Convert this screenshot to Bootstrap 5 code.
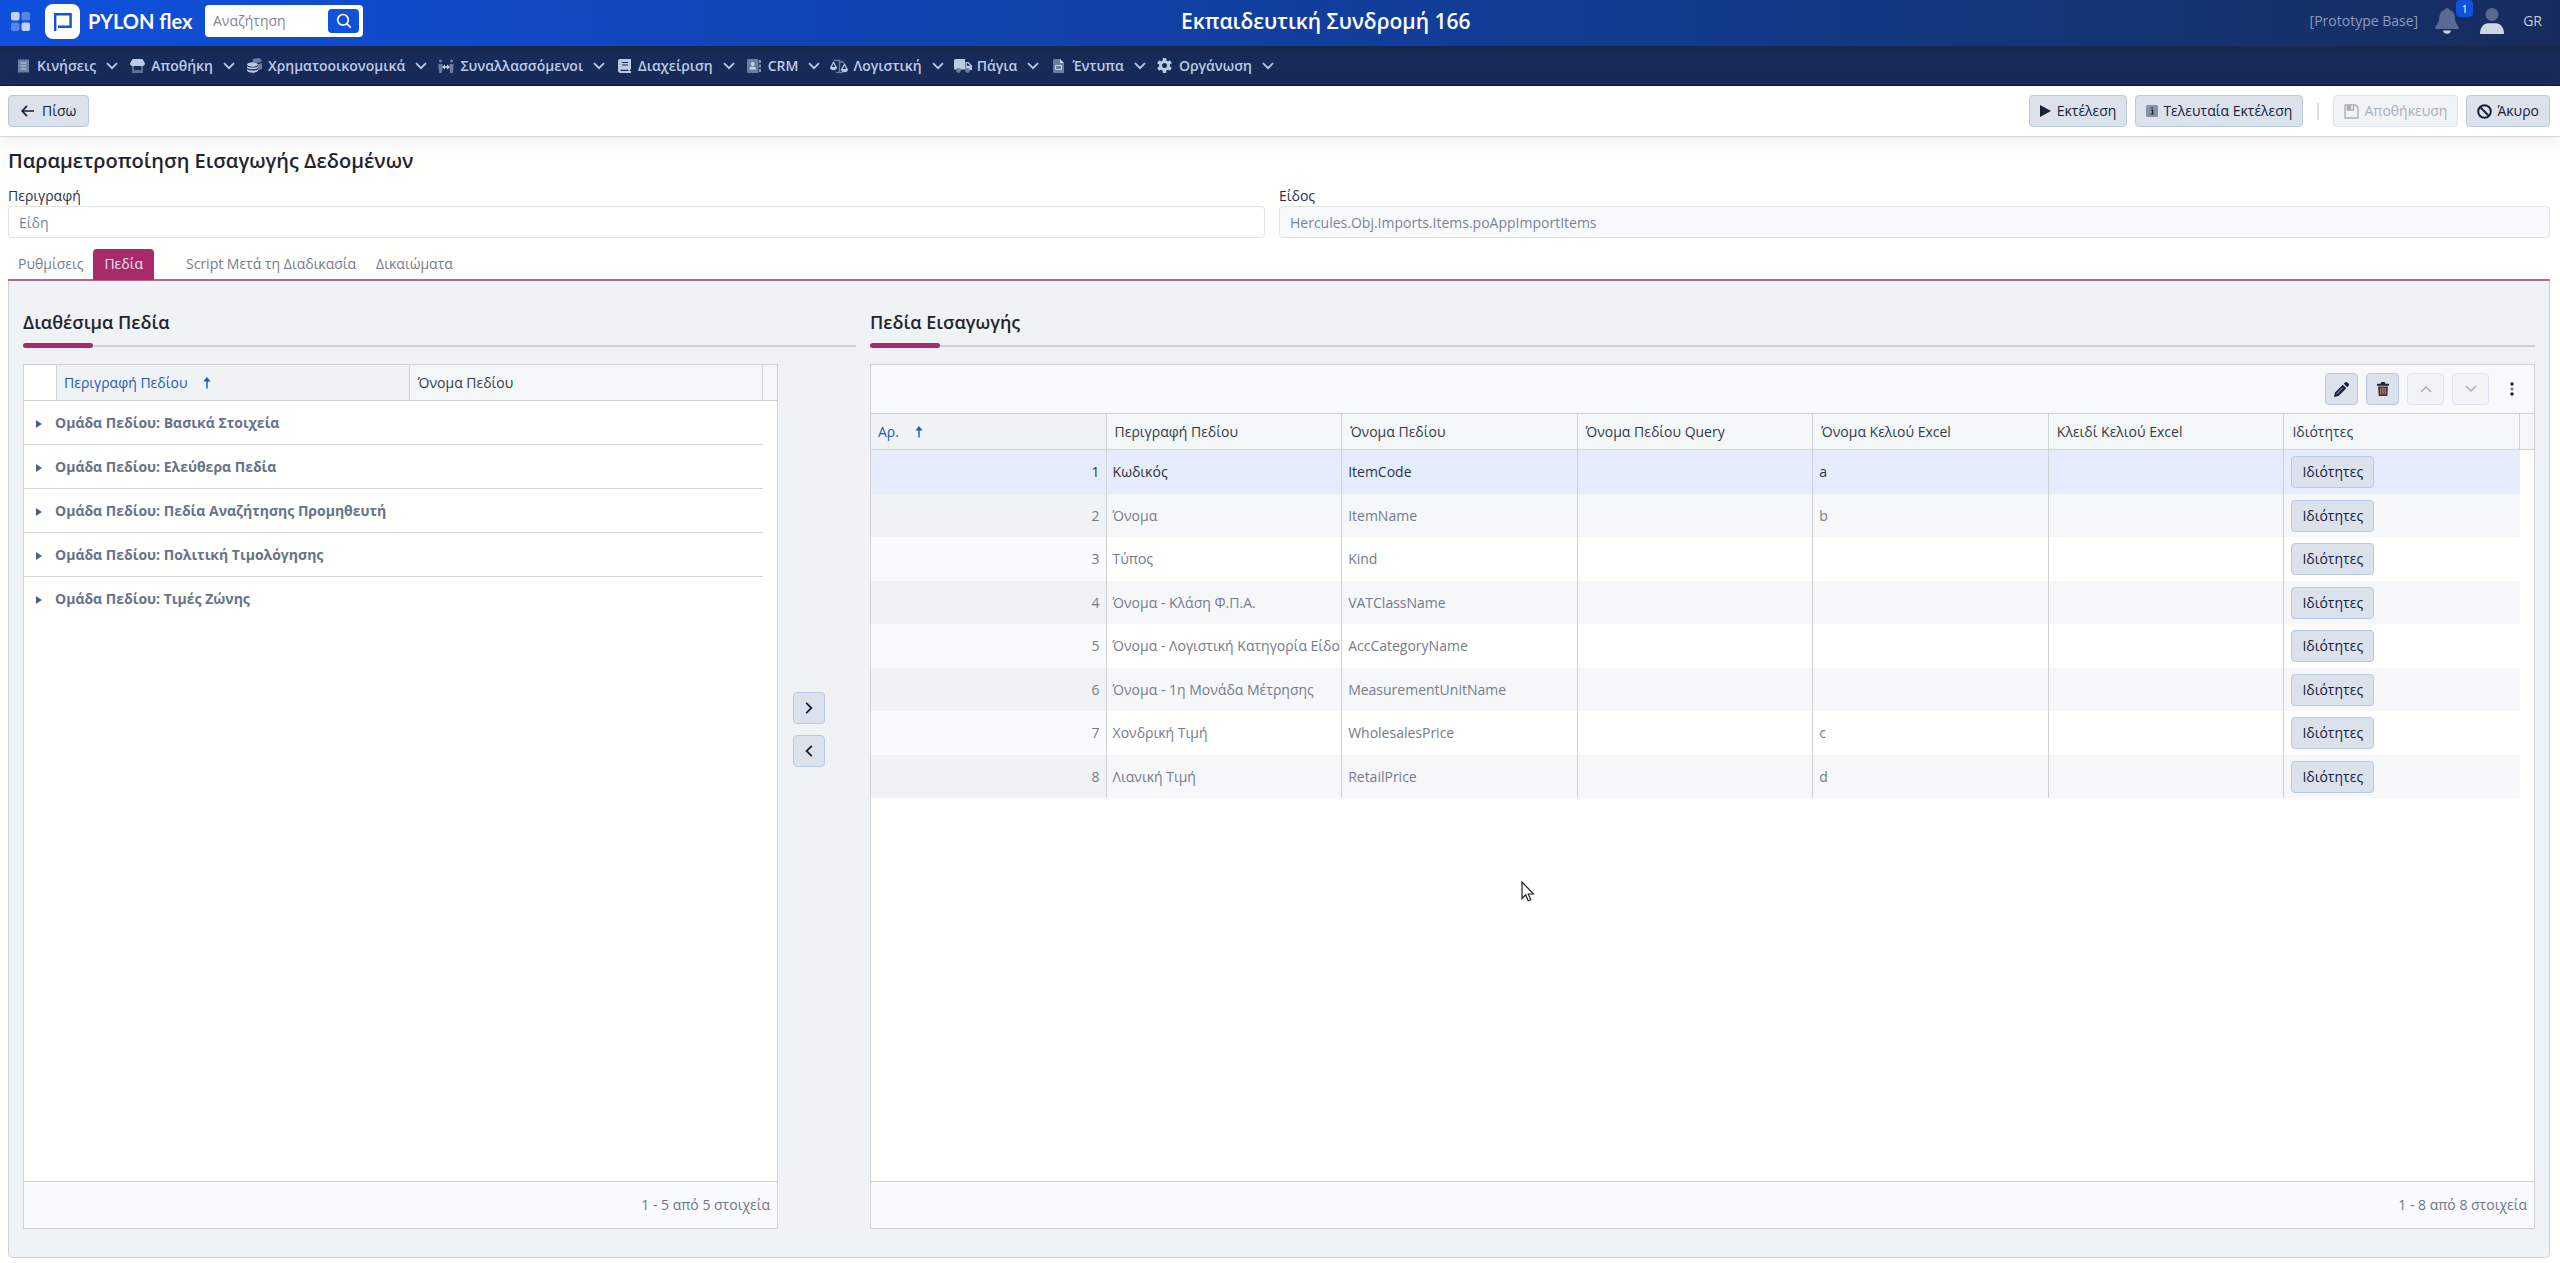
<!DOCTYPE html>
<html lang="el">
<head>
<meta charset="utf-8">
<meta name="viewport" content="width=device-width, initial-scale=1">
<title>Παραμετροποίηση Εισαγωγής Δεδομένων</title>
<link href="https://cdn.jsdelivr.net/npm/bootstrap@5.3.0/dist/css/bootstrap.min.css" rel="stylesheet">
<style>
body{font-family:"Open Sans","Noto Sans",sans-serif;font-size:14px;line-height:20px;color:#1f2430;background:#fffffd}
a{text-decoration:none}
svg{display:block;flex:none}
.brandbar{height:46px;padding-bottom:4px;background:linear-gradient(90deg,#0f50de 0%,#1046b8 28%,#123d98 56%,#12377c 78%,#172c5c 100%);color:#fff}
.apps{margin:0 15px 0 11px}
.logo-name{font-family:"Lato",sans-serif;font-size:20px;font-weight:700;color:#fff;margin-left:8px;width:117px}
.search-box{width:158px;height:32px;background:#fff;border-radius:4px;padding:0 4px 0 8px}
.search-box input{border:0;outline:0;background:none;color:#5f6b80;width:100%;min-width:0;padding:0}
.search-box input::placeholder{color:#7d8698;opacity:1}
.search-box button{width:31px;height:24px;border:0;border-radius:4px;background:#1152db;color:#fff;padding:0}
.company{font-size:21px;font-weight:600;line-height:28px;margin:0;padding-right:21px}
.base-name{color:#8c9abd}
.bell{margin:0 21px 0 17px}
.bell-count{left:21px;top:-8px;width:17px;height:17px;border-radius:4px;background:#1152db;color:#fff;font-size:11px;line-height:17px;text-align:center}
.lang{color:#c3cbdc;margin:0 18px 0 19px}
.menubar{height:40px;background:linear-gradient(#19274c,#182a58 8px);border-bottom:1px solid #0a1636;padding-left:14px;gap:10px}
.menubar a{color:#bccae6;font-weight:600;gap:5px}
.menubar .ico{width:18px;display:flex;justify-content:center}
.menubar .chev{margin-left:5px}
.actionbar{height:51px;border-bottom:1px solid #d5d7da;box-shadow:0 4px 14px rgba(90,110,150,.12);padding:0 10px 0 8px}
.btn-flat{--bs-btn-font-size:14px;--bs-btn-line-height:20px;--bs-btn-padding-y:5px;--bs-btn-padding-x:10px;--bs-btn-border-radius:4px;--bs-btn-bg:#dbe2ec;--bs-btn-border-color:#b9c8e3;--bs-btn-color:#16213a;--bs-btn-hover-bg:#cdd7e6;--bs-btn-hover-border-color:#b9c8e3;--bs-btn-disabled-bg:#f1f4f6;--bs-btn-disabled-border-color:#dbe3f0;--bs-btn-disabled-color:#a9aeb6;--bs-btn-disabled-opacity:1;display:inline-flex;align-items:center;justify-content:center;height:32px;gap:5px;white-space:nowrap}
.btn-square{width:33px;--bs-btn-padding-x:0px}
.btn-wide{width:37px}
.btn-back{--bs-btn-padding-x:12px;gap:8px}
.sep{width:2px;height:17px;background:#dcdfe5;margin:0 14px}
.page-title{font-size:20px;line-height:28px;font-weight:600;margin:10px 0 11px}
.main-area{padding:0 10px 5px 8px}
.fields .form-label{line-height:20px;margin:0;color:#26334f;display:block}
.fields .form-control{height:32px;font-size:14px;line-height:20px;padding:5px 10px;border:1px solid #dfe3e6;border-radius:4px;color:#7b8494;background:#fffffd}
.fields .form-control:disabled{background:#f8f9fb}
.field-left{padding-right:14px}
.tabs{margin-top:11px;height:32px;border-bottom:2px solid #b5668f}
.tabs .nav-link{padding:5px 10px;height:31px;line-height:20px;color:#747d8d;border-radius:4px 4px 0 0}
.tabs .nav-link.active{background:#a92a6b;color:#f7e6ef;padding:5px 11px}
.tabs .gap-tab{width:22px}
.panel{background:#eff3f5;border:1px solid #cfd2d5;border-top:0;border-radius:0 0 5px 5px;padding:0 14px 28px}
.sect{font-size:18px;line-height:24px;font-weight:600;margin:29px 0 9px}
.rule{height:5px;display:flex;align-items:center}
.rule::before{content:"";width:70px;height:5px;border-radius:3px;background:#a92a6b}
.rule::after{content:"";flex:1;height:2px;background:#cfd0d2}
.left-side{width:833px;margin-right:14px}
.grid-wrap{margin-top:16px}
.gridbox{border:1px solid #cfd2d5;background:#fffffd}
.left-side .gridbox{width:755px}
.transfer{width:61px;padding-top:328px;gap:11px}
.transfer .btn-square{width:32px}
.grid-foot{height:47px;border-top:1px solid #cfd2d5;background:#f9fafe;color:#6d7686;padding-right:7px}
.grid-tools{height:49px;background:#f8f9fb;border-bottom:1px solid #cfd2d5;padding-right:15px}
.gt{width:100%;table-layout:fixed;border-collapse:separate;border-spacing:0}
.gt th,.gt td{overflow:hidden;white-space:nowrap;border-right:1px solid #cfd2d5;vertical-align:middle}
.gt thead th{height:36px;padding:0 8px;background:#f4f7f8;border-bottom:1px solid #cfd2d5;font-weight:400;color:#333945}
.gt thead th:last-child{border-right:0;padding:0}
.gt thead th.sorted{background:#eff3f5;color:#2258bb;padding-left:7px}
.gt thead th.blank{background:#fffffd}
.sorted svg{display:inline-block;margin-left:15px;vertical-align:-1px}
.rows td{padding:0 6px;color:#747c8b;height:43px}
.rows tr:nth-child(odd) td{height:44px}
.rows td:nth-child(1){text-align:right;background:#f9fafc}
.rows td:nth-child(n+7){border-right:0;padding-left:7px}
.rows tr:nth-child(even) td:nth-child(-n+7){background:#f5f7f9}
.rows tr:nth-child(even) td:nth-child(1){background:#eff3f5}
.rows tr.picked td:nth-child(-n+7){background:#e5ecfb;color:#2c3342}
.groups td{height:44px;font-weight:700;color:#66738a;border-right:0;padding:0 0 0 12px}
.groups td svg{display:inline-block;margin-right:13px}
.groups tr:not(:last-child) td:first-child{border-bottom:1px solid #d3d6d8}
.pointer{left:1521px;top:881px}
</style>
<script defer src="https://cdn.jsdelivr.net/npm/bootstrap@5.3.0/dist/js/bootstrap.bundle.min.js"></script>
</head>
<body class="d-flex flex-column min-vh-100 position-relative">
<svg width="0" height="0" class="position-absolute" aria-hidden="true">
<symbol id="chev" viewBox="0 0 12 8"><path d="M1 1.2l5 5 5-5" fill="none" stroke="currentColor" stroke-width="1.8"/></symbol>
<symbol id="sortup" viewBox="0 0 10 12"><path d="M5 0l3.6 4.6H5.7V11.500H4.300V4.600H1.400z" fill="currentColor"/></symbol>
<symbol id="tri" viewBox="0 0 6 8"><path d="M0 0l6 4-6 4z" fill="#4d5f86"/></symbol>
</svg>

<header class="brandbar d-flex align-items-center">
<a href="#" class="apps" aria-label="Εφαρμογές"><svg width="19" height="19" viewBox="0 0 19 19" fill="#fff"><rect width="8.500" height="8.500" rx="2" opacity=".75"/><rect x="10.500" width="8.500" height="8.500" rx="2" opacity=".3"/><rect y="10.500" width="8.500" height="8.500" rx="2" opacity=".3"/><rect x="10.500" y="10.500" width="8.500" height="8.500" rx="2" opacity=".75"/></svg></a>
<svg width="35" height="35" viewBox="0 0 35 35"><rect width="35" height="35" rx="8" fill="#fff"/><path d="M10.200 27V10.200h15.400V22.800H13" fill="none" stroke="#1450d8" stroke-width="2.400"/></svg>
<span class="logo-name">PYLON flex</span>
<form class="search-box d-flex align-items-center"><input type="search" placeholder="Αναζήτηση" aria-label="Αναζήτηση"><button type="button" class="d-flex align-items-center justify-content-center flex-shrink-0" aria-label="Εύρεση"><svg width="16" height="16" viewBox="0 0 16 16" fill="none" stroke="currentColor" stroke-width="1.700"><circle cx="7" cy="6.800" r="5.300"/><path d="M10.800 10.600l4 4"/></svg></button></form>
<h1 class="company flex-grow-1 text-center">Εκπαιδευτική Συνδρομή 166</h1>
<span class="base-name">[Prototype Base]</span>
<span class="bell position-relative"><svg width="24" height="26" viewBox="0 0 24 26"><path d="M12 0c-1.300 0-2 .8-2 1.800C6.500 2.700 4.600 5.400 4.400 9c-.2 4.500-1.600 7-4 9.600v2.400h23.200v-2.400c-2.400-2.600-3.600-5.100-3.800-9.600-.2-3.600-2.300-6.300-5.800-7.200C14 .8 13.300 0 12 0z" fill="#586a92"/><path d="M8 22.500h8c-.3 2-1.900 3.300-4 3.300s-3.700-1.300-4-3.300z" fill="#d0d6e2"/></svg><span class="bell-count position-absolute">1</span></span>
<svg width="24" height="26" viewBox="0 0 24 26"><circle cx="12" cy="6.500" r="6.500" fill="#586a92"/><path d="M0 26c0-6.500 3.500-10.800 8-10.800h8c4.500 0 8 4.300 8 10.800z" fill="#d0d6e2"/></svg>
<a href="#" class="lang">GR</a>
</header>

<nav class="menubar d-flex align-items-center">
<a href="#" class="d-flex align-items-center"><span class="ico"><svg width="11" height="14" viewBox="0 0 11 14"><path d="M0 0l1.400 1L2.800 0l1.300 1L5.500 0l1.400 1L8.200 0l1.400 1L11 0v14l-1.400-1-1.400 1-1.300-1-1.400 1-1.400-1-1.300 1-1.400-1L0 14z" fill="#6d7da0"/><path d="M2.500 4h6M2.500 7h6M2.500 10h6" stroke="#c3d0e8"/></svg></span>Κινήσεις<svg class="chev" width="12" height="8"><use href="#chev"/></svg></a>
<a href="#" class="d-flex align-items-center"><span class="ico"><svg width="15" height="14" viewBox="0 0 15 14"><path d="M2 6h11v8H2z" fill="#5d6e95"/><path d="M4 7h7v4H4z" fill="#182a58"/><path d="M2.500 0h10L15 4.500c0 1.500-1 2.500-2.200 2.500H2.200C1 7 0 6 0 4.500z" fill="#bccae6"/></svg></span>Αποθήκη<svg class="chev" width="12" height="8"><use href="#chev"/></svg></a>
<a href="#" class="d-flex align-items-center"><span class="ico"><svg width="15" height="15" viewBox="0 0 15 15"><g fill="#6d7da0"><ellipse cx="10" cy="2.500" rx="4.500" ry="2.200"/><path d="M11 6c2 0 3.500-.7 4-1.500v6c-.8 1-2 1.500-4 1.500z"/></g><g fill="#bccae6"><ellipse cx="5.500" cy="6.500" rx="5.500" ry="2.200"/><path d="M0 8.200c2 1.800 9 1.800 11 0v1.500c-2 2-9 2-11 0zM0 11.200c2 1.800 9 1.800 11 0v1.600c-2 2.600-9 2.600-11 0z"/></g></svg></span>Χρηματοοικονομικά<svg class="chev" width="12" height="8"><use href="#chev"/></svg></a>
<a href="#" class="d-flex align-items-center"><span class="ico"><svg width="16" height="14" viewBox="0 0 16 14"><g fill="#6d7da0"><circle cx="2.500" cy="2" r="1.600"/><circle cx="13.500" cy="2" r="1.600"/><path d="M.5 5h4v4l-.6 5H1.300L.5 9zM11.500 5h4v4l-.8 5h-2.600l-.6-5z"/></g><path d="M4 8l3-2.500v1.700h2V5.500L12 8l-3 2.500V8.800H7v1.700z" fill="#c9d5ec"/></svg></span>Συναλλασσόμενοι<svg class="chev" width="12" height="8"><use href="#chev"/></svg></a>
<a href="#" class="d-flex align-items-center"><span class="ico"><svg width="13" height="14" viewBox="0 0 13 14"><path d="M2 0h11v10.500h-1V12h1v2H2.500C1 14 0 13 0 11.800V2.200C0 1 .9 0 2 0z" fill="#bccae6"/><path d="M4 3.500h6M4 6h6" stroke="#182a58" stroke-width="1.200"/><path d="M2.500 10.800h8v1.200h-8z" fill="#182a58"/></svg></span>Διαχείριση<svg class="chev" width="12" height="8"><use href="#chev"/></svg></a>
<a href="#" class="d-flex align-items-center"><span class="ico"><svg width="14" height="14" viewBox="0 0 14 14"><rect width="11.500" height="14" rx="1.500" fill="#6d7da0"/><circle cx="5.700" cy="5" r="1.900" fill="#c9d5ec"/><path d="M2.500 10.500c0-2 1-2.700 2-2.700h2.500c1 0 2 .7 2 2.700z" fill="#c9d5ec"/><path d="M13 1v3M13 5.500v3M13 10v3" stroke="#bccae6" stroke-width="1.300"/></svg></span>CRM<svg class="chev" width="12" height="8"><use href="#chev"/></svg></a>
<a href="#" class="d-flex align-items-center"><span class="ico"><svg width="18" height="14" viewBox="0 0 18 14"><path d="M4 1.500h6M9.500 1v12M6 13.400h7M9 2l5 1.800" stroke="#6d7da0" stroke-width="1.500" fill="none"/><path d="M0 8.500L3.500 2 7 8.500C7 12 0 12 0 8.500zm3.500-4L1.800 8h3.400zM11 10.500L14.500 4 18 10.500c0 3.500-7 3.500-7 0zm3.500-4L12.800 10h3.400z" fill="#bccae6" fill-rule="evenodd"/></svg></span>Λογιστική<svg class="chev" width="12" height="8"><use href="#chev"/></svg></a>
<a href="#" class="d-flex align-items-center"><span class="ico"><svg width="18" height="14" viewBox="0 0 18 14"><path d="M0 1.500C0 .7.600 0 1.500 0H11v10.500H0z" fill="#bccae6"/><path d="M11.500 3h3L18 6.500V11h-6.500zm1.300 1.200v2.500h3.500L14 4.200z" fill="#bccae6" fill-rule="evenodd"/><circle cx="4.500" cy="11.500" r="2.400" fill="#6d7da0"/><circle cx="13.500" cy="11.500" r="2.400" fill="#6d7da0"/></svg></span>Πάγια<svg class="chev" width="12" height="8"><use href="#chev"/></svg></a>
<a href="#" class="d-flex align-items-center"><span class="ico"><svg width="11" height="14" viewBox="0 0 11 14"><path d="M1.500 0H7l4 4v10H1.500C.7 14 0 13.300 0 12.500v-11C0 .7.700 0 1.500 0z" fill="#6d7da0"/><path d="M7 0l4 4H7z" fill="#c9d5ec"/><path d="M2.500 6.500h6v4h-6z" fill="none" stroke="#c9d5ec"/></svg></span>Έντυπα<svg class="chev" width="12" height="8"><use href="#chev"/></svg></a>
<a href="#" class="d-flex align-items-center"><span class="ico"><svg width="15" height="15" viewBox="0 0 15 15"><g fill="#bccae6"><rect x="5.700" width="3.600" height="15" rx=".8"/><rect x="5.700" width="3.600" height="15" rx=".8" transform="rotate(60 7.500 7.500)"/><rect x="5.700" width="3.600" height="15" rx=".8" transform="rotate(120 7.500 7.500)"/><circle cx="7.500" cy="7.500" r="5.400"/></g><circle cx="7.500" cy="7.500" r="2.500" fill="#182a58"/></svg></span>Οργάνωση<svg class="chev" width="12" height="8"><use href="#chev"/></svg></a>
</nav>

<div class="actionbar d-flex align-items-center">
<button type="button" class="btn btn-flat btn-back me-auto"><svg width="13" height="12" viewBox="0 0 13 12" fill="none" stroke="currentColor" stroke-width="1.700"><path d="M6 .8L1.200 6 6 11.200M1.200 6H13"/></svg>Πίσω</button>
<div class="d-flex align-items-center gap-2">
<button type="button" class="btn btn-flat"><svg width="12" height="12" viewBox="0 0 12 12"><path d="M0 0l11 6-11 6z" fill="currentColor"/></svg>Εκτέλεση</button>
<button type="button" class="btn btn-flat"><svg width="12" height="12" viewBox="0 0 12 12"><rect width="12" height="12" rx="1.500" fill="#8892a6"/><path d="M5 5h1.600v4M4.500 9h3.200M5.300 2.800h1.500" stroke="#16213a" stroke-width="1.200" fill="none"/></svg>Τελευταία Εκτέλεση</button>
</div>
<span class="sep"></span>
<div class="d-flex align-items-center gap-2">
<button type="button" class="btn btn-flat" disabled><svg width="15" height="15" viewBox="0 0 15 15" fill="none" stroke="currentColor" stroke-width="1.300"><path d="M1 1h10.500L14 3.500V14H1z"/><path d="M3.500 1v5h6V1"/><path d="M3.500 1.500h3v4h-3z" fill="currentColor"/></svg>Αποθήκευση</button>
<button type="button" class="btn btn-flat"><svg width="15" height="15" viewBox="0 0 15 15" fill="none" stroke="currentColor" stroke-width="2"><circle cx="7.500" cy="7.500" r="6.300"/><path d="M3 3l9 9"/></svg>Άκυρο</button>
</div>
</div>

<main class="main-area d-flex flex-column flex-grow-1">
<h2 class="page-title">Παραμετροποίηση Εισαγωγής Δεδομένων</h2>
<div class="row g-0 fields">
<div class="col-6 field-left"><label class="form-label" for="descr">Περιγραφή</label><input id="descr" class="form-control" value="Είδη"></div>
<div class="col-6"><label class="form-label" for="kind">Είδος</label><input id="kind" class="form-control" value="Hercules.Obj.Imports.Items.poAppImportItems" disabled></div>
</div>
<nav class="nav tabs">
<a href="#" class="nav-link">Ρυθμίσεις</a><a href="#" class="nav-link active">Πεδία</a><span class="gap-tab"></span><a href="#" class="nav-link">Script Μετά τη Διαδικασία</a><a href="#" class="nav-link">Δικαιώματα</a>
</nav>
<div class="panel d-flex flex-grow-1">

<section class="left-side d-flex flex-column flex-shrink-0">
<h3 class="sect">Διαθέσιμα Πεδία</h3><div class="rule"></div>
<div class="grid-wrap d-flex flex-grow-1">
<div class="gridbox d-flex flex-column">
<table class="gt">
<colgroup><col style="width:33px"><col><col><col style="width:14px"></colgroup>
<thead><tr><th class="blank"></th><th class="sorted">Περιγραφή Πεδίου<svg width="10" height="12"><use href="#sortup"/></svg></th><th>Όνομα Πεδίου</th><th></th></tr></thead>
<tbody class="groups">
<tr><td colspan="3"><svg width="6" height="8"><use href="#tri"/></svg>Ομάδα Πεδίου: Βασικά Στοιχεία</td><td></td></tr>
<tr><td colspan="3"><svg width="6" height="8"><use href="#tri"/></svg>Ομάδα Πεδίου: Ελεύθερα Πεδία</td><td></td></tr>
<tr><td colspan="3"><svg width="6" height="8"><use href="#tri"/></svg>Ομάδα Πεδίου: Πεδία Αναζήτησης Προμηθευτή</td><td></td></tr>
<tr><td colspan="3"><svg width="6" height="8"><use href="#tri"/></svg>Ομάδα Πεδίου: Πολιτική Τιμολόγησης</td><td></td></tr>
<tr><td colspan="3"><svg width="6" height="8"><use href="#tri"/></svg>Ομάδα Πεδίου: Τιμές Ζώνης</td><td></td></tr>
</tbody>
</table>
<div class="grid-foot d-flex align-items-center justify-content-end mt-auto">1 - 5 από 5 στοιχεία</div>
</div>
<div class="transfer d-flex flex-column align-items-center">
<button type="button" class="btn btn-flat btn-square" aria-label="Προσθήκη"><svg width="8" height="12" viewBox="0 0 8 12"><path d="M1.200 .8L6.400 6l-5.200 5.200" fill="none" stroke="currentColor" stroke-width="1.800"/></svg></button>
<button type="button" class="btn btn-flat btn-square" aria-label="Αφαίρεση"><svg width="8" height="12" viewBox="0 0 8 12"><path d="M6.800 .8L1.600 6l5.200 5.200" fill="none" stroke="currentColor" stroke-width="1.800"/></svg></button>
</div>
</div>
</section>

<section class="d-flex flex-column flex-grow-1">
<h3 class="sect">Πεδία Εισαγωγής</h3><div class="rule"></div>
<div class="grid-wrap gridbox d-flex flex-column flex-grow-1">
<div class="grid-tools d-flex align-items-center justify-content-end gap-2">
<button type="button" class="btn btn-flat btn-square" aria-label="Επεξεργασία"><svg width="15" height="15" viewBox="0 0 15 15"><path d="M0 15l1-4.500 7.800-7.800 3.500 3.500L4.500 14zM9.800 1.800L11 .6c.8-.8 1.700-.8 2.500 0l.9.9c.8.8.8 1.700 0 2.500l-1.200 1.200z" fill="currentColor"/><path d="M2.800 11.800l6-6" stroke="#dbe2ec" stroke-width=".8"/></svg></button>
<button type="button" class="btn btn-flat btn-square" aria-label="Διαγραφή"><svg width="12" height="14" viewBox="0 0 12 14"><path d="M0 1.800h3.500L4.300 0h3.400l.8 1.800H12v2H0z" fill="#202632"/><path d="M1 4.500h10L10.300 14H1.700z" fill="#4a3038"/><path d="M3.800 5.800v6.500M6 5.800v6.500M8.200 5.800v6.500" stroke="#d8a890" stroke-width=".9"/></svg></button>
<button type="button" class="btn btn-flat btn-square btn-wide" aria-label="Πάνω" disabled><svg width="12" height="8" viewBox="0 0 12 8"><path d="M1 7l5-5 5 5" fill="none" stroke="currentColor" stroke-width="1.500"/></svg></button>
<button type="button" class="btn btn-flat btn-square btn-wide" aria-label="Κάτω" disabled><svg width="12" height="8" viewBox="0 0 12 8"><path d="M1 1l5 5 5-5" fill="none" stroke="currentColor" stroke-width="1.500"/></svg></button>
<button type="button" class="btn p-0 border-0 ms-2" aria-label="Περισσότερα"><svg width="14" height="14" viewBox="0 0 14 14"><circle cx="7" cy="2" r="1.700" fill="#16213a"/><circle cx="7" cy="7" r="1.500" fill="#6b7488"/><circle cx="7" cy="12" r="1.700" fill="#16213a"/></svg></button>
</div>
<table class="gt">
<colgroup><col><col><col><col><col><col><col><col style="width:14px"></colgroup>
<thead><tr><th class="sorted">Αρ.<svg width="10" height="12"><use href="#sortup"/></svg></th><th>Περιγραφή Πεδίου</th><th>Όνομα Πεδίου</th><th>Όνομα Πεδίου Query</th><th>Όνομα Κελιού Excel</th><th>Κλειδί Κελιού Excel</th><th>Ιδιότητες</th><th></th></tr></thead>
<tbody class="rows">
<tr class="picked"><td>1</td><td>Κωδικός</td><td>ItemCode</td><td></td><td>a</td><td></td><td><button type="button" class="btn btn-flat">Ιδιότητες</button></td><td></td></tr>
<tr><td>2</td><td>Όνομα</td><td>ItemName</td><td></td><td>b</td><td></td><td><button type="button" class="btn btn-flat">Ιδιότητες</button></td><td></td></tr>
<tr><td>3</td><td>Τύπος</td><td>Kind</td><td></td><td></td><td></td><td><button type="button" class="btn btn-flat">Ιδιότητες</button></td><td></td></tr>
<tr><td>4</td><td>Όνομα - Κλάση Φ.Π.Α.</td><td>VATClassName</td><td></td><td></td><td></td><td><button type="button" class="btn btn-flat">Ιδιότητες</button></td><td></td></tr>
<tr><td>5</td><td>Όνομα - Λογιστική Κατηγορία Είδο</td><td>AccCategoryName</td><td></td><td></td><td></td><td><button type="button" class="btn btn-flat">Ιδιότητες</button></td><td></td></tr>
<tr><td>6</td><td>Όνομα - 1η Μονάδα Μέτρησης</td><td>MeasurementUnitName</td><td></td><td></td><td></td><td><button type="button" class="btn btn-flat">Ιδιότητες</button></td><td></td></tr>
<tr><td>7</td><td>Χονδρική Τιμή</td><td>WholesalesPrice</td><td></td><td>c</td><td></td><td><button type="button" class="btn btn-flat">Ιδιότητες</button></td><td></td></tr>
<tr><td>8</td><td>Λιανική Τιμή</td><td>RetailPrice</td><td></td><td>d</td><td></td><td><button type="button" class="btn btn-flat">Ιδιότητες</button></td><td></td></tr>
</tbody>
</table>
<div class="grid-foot d-flex align-items-center justify-content-end mt-auto">1 - 8 από 8 στοιχεία</div>
</div>
</section>
</div>
</main>
<svg class="pointer position-absolute" width="14" height="21" viewBox="0 0 14 21"><path d="M1 1v16.500l3.700-3.600 2.500 5.900 2.600-1.100-2.500-5.700h5.200z" fill="#fff" stroke="#222" stroke-width="1.200"/></svg>
</body>
</html>
